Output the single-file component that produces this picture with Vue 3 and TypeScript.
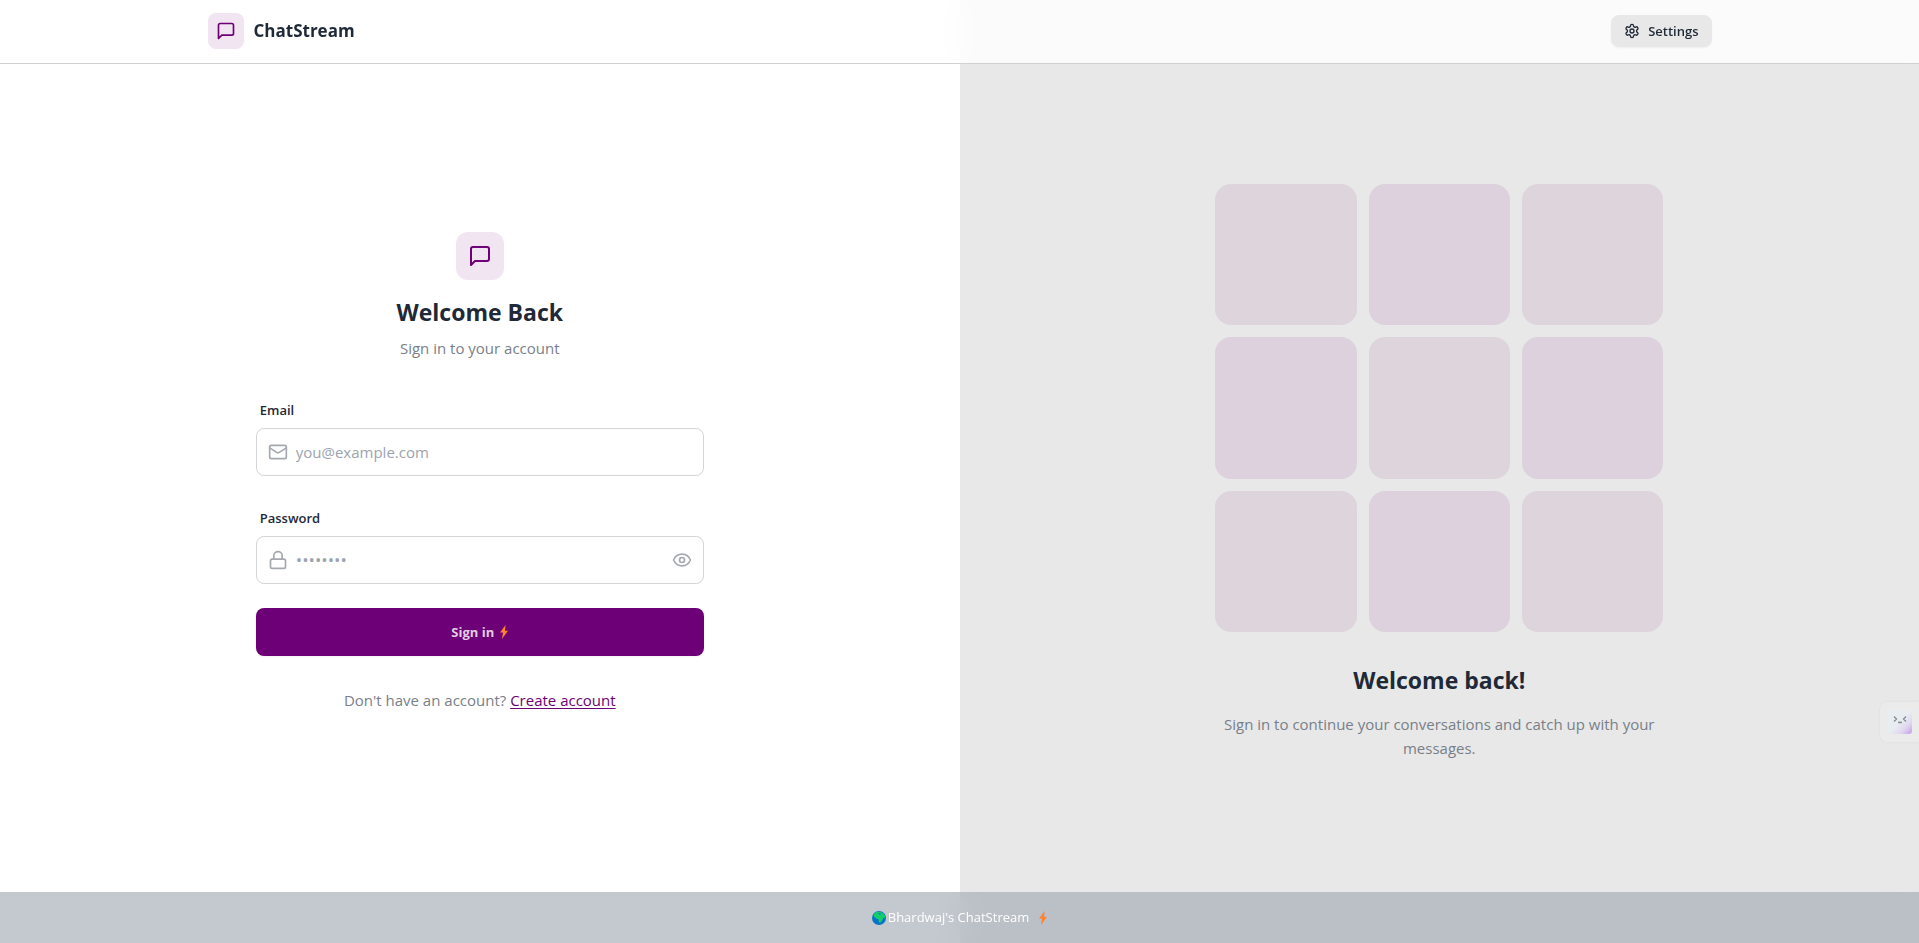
<script setup lang="ts">
import { ref } from 'vue'

const email = ref('')
const password = ref('')
const showPassword = ref(false)
const tiles = Array.from({ length: 9 }, (_, i) => i)
</script>

<template>
  <div class="page">
    <header class="topbar">
      <div class="topbar-inner">
        <a class="brand" href="#">
          <span class="brand-mark">
            <svg class="icon-20" viewBox="0 0 24 24" aria-hidden="true"><path d="M21 15a2 2 0 0 1-2 2H7l-4 4V5a2 2 0 0 1 2-2h14a2 2 0 0 1 2 2z" /></svg>
          </span>
          <span class="brand-name">ChatStream</span>
        </a>
        <button class="settings" type="button">
          <svg class="icon-16" viewBox="0 0 24 24" aria-hidden="true">
            <path d="M12.22 2h-.44a2 2 0 0 0-2 2v.18a2 2 0 0 1-1 1.73l-.43.25a2 2 0 0 1-2 0l-.15-.08a2 2 0 0 0-2.73.73l-.22.38a2 2 0 0 0 .73 2.73l.15.1a2 2 0 0 1 1 1.72v.51a2 2 0 0 1-1 1.74l-.15.09a2 2 0 0 0-.73 2.73l.22.38a2 2 0 0 0 2.73.73l.15-.08a2 2 0 0 1 2 0l.43.25a2 2 0 0 1 1 1.73V20a2 2 0 0 0 2 2h.44a2 2 0 0 0 2-2v-.18a2 2 0 0 1 1-1.73l.43-.25a2 2 0 0 1 2 0l.15.08a2 2 0 0 0 2.73-.73l.22-.39a2 2 0 0 0-.73-2.73l-.15-.08a2 2 0 0 1-1-1.74v-.5a2 2 0 0 1 1-1.74l.15-.09a2 2 0 0 0 .73-2.73l-.22-.38a2 2 0 0 0-2.73-.73l-.15.08a2 2 0 0 1-2 0l-.43-.25a2 2 0 0 1-1-1.73V4a2 2 0 0 0-2-2z" />
            <circle cx="12" cy="12" r="3" />
          </svg>
          <span>Settings</span>
        </button>
      </div>
    </header>

    <main class="columns">
      <section class="panel">
        <div class="content">
          <div class="intro">
            <span class="intro-mark">
              <svg class="icon-24" viewBox="0 0 24 24" aria-hidden="true"><path d="M21 15a2 2 0 0 1-2 2H7l-4 4V5a2 2 0 0 1 2-2h14a2 2 0 0 1 2 2z" /></svg>
            </span>
            <h1>Welcome Back</h1>
            <p>Sign in to your account</p>
          </div>

          <form class="form" @submit.prevent>
            <div class="field">
              <label for="email">Email</label>
              <div class="control">
                <svg class="icon-20" viewBox="0 0 24 24" aria-hidden="true">
                  <rect x="2" y="4" width="20" height="16" rx="2" />
                  <path d="m22 7-8.97 5.7a1.94 1.94 0 0 1-2.06 0L2 7" />
                </svg>
                <input id="email" v-model="email" type="email" placeholder="you@example.com" />
              </div>
            </div>
            <div class="field">
              <label for="password">Password</label>
              <div class="control">
                <svg class="icon-20" viewBox="0 0 24 24" aria-hidden="true">
                  <rect x="3" y="11" width="18" height="11" rx="2" />
                  <path d="M7 11V7a5 5 0 0 1 10 0v4" />
                </svg>
                <input id="password" v-model="password" class="secret" :type="showPassword ? 'text' : 'password'" placeholder="••••••••" />
                <button class="reveal" type="button" aria-label="Show password" @click="showPassword = !showPassword">
                  <svg class="icon-20" viewBox="0 0 24 24" aria-hidden="true">
                    <path d="M2.06 12.35a1 1 0 0 1 0-.7 10.75 10.75 0 0 1 19.88 0 1 1 0 0 1 0 .7 10.75 10.75 0 0 1-19.88 0" />
                    <circle cx="12" cy="12" r="3" />
                  </svg>
                </button>
              </div>
            </div>
            <button class="submit" type="submit">
              <span>Sign in</span>
              <svg class="bolt" viewBox="0 0 8 14" aria-hidden="true"><path d="M5.6 0 0 7.6h3L2 14l6-8.2H5z" /></svg>
            </button>
          </form>

          <p class="signup">Don't have an account? <a href="#">Create account</a></p>
        </div>
      </section>

      <section class="panel showcase">
        <div class="content">
          <div class="tiles">
            <div v-for="n in tiles" :key="n" class="tile" :class="{ strong: n % 2 === 1 }"></div>
          </div>
          <h2>Welcome back!</h2>
          <p>Sign in to continue your conversations and catch up with your messages.</p>
        </div>
      </section>
    </main>

    <footer class="footer">
      <svg class="globe" viewBox="0 0 14 14" aria-hidden="true">
        <circle cx="7" cy="7" r="7" fill="#0a74c4" />
        <path d="M2.6 2.2C4.3.8 6 .6 7.8 1l1.6.2 2.1 1.300 1.700 2.700-.7 2.200-1.500-.8-.4 2.200-2 2.800-1.400.2-.8-3.600-2.200-.6L2.400 6l-1-2.100z" fill="#13cf6b" />
        <path d="m5.5 2.600 2.300-.4 2 .8-2.200.5z" fill="#0a74c4" />
      </svg>
      <span>Bhardwaj's ChatStream</span>
      <svg class="bolt bolt-end" viewBox="0 0 8 14" aria-hidden="true"><path d="M5.6 0 0 7.6h3L2 14l6-8.2H5z" /></svg>
    </footer>

    <button class="helper" type="button" aria-label="Assistant">
      <svg viewBox="0 0 24 24" aria-hidden="true">
        <defs>
          <linearGradient id="helper-fill" x1="0" y1="0" x2="1" y2="1">
            <stop offset="0.5" stop-color="#e8edf2" />
            <stop offset="0.75" stop-color="#dfd5ee" />
            <stop offset="1" stop-color="#c39be8" />
          </linearGradient>
        </defs>
        <rect width="24" height="24" rx="3" fill="url(#helper-fill)" />
        <path d="m6 6.5 2.500 2.500L6 11.500M18 6.500 15.500 9l2.500 2.500M10.800 11.500v1h2.400v-1" fill="none" stroke="#858a92" stroke-width="1.3" />
      </svg>
    </button>
  </div>
</template>

<style>
body {
  background: #fff;
}
</style>

<style scoped>
.page {
  color: #1f2937;
  font-family: "Segoe UI", "Open Sans", "Noto Sans", sans-serif;
  font-size: 15px;
  line-height: 24px;
}

.page *,
.page {
  box-sizing: border-box;
}

h1,
h2,
p {
  margin: 0;
}

button,
input {
  font: inherit;
  color: inherit;
}

button {
  cursor: pointer;
}

svg {
  display: block;
  flex: none;
}

.icon-16,
.icon-20,
.icon-24 {
  fill: none;
  stroke: currentColor;
  stroke-width: 2;
  stroke-linecap: round;
  stroke-linejoin: round;
}

.icon-16 {
  width: 16px;
  height: 16px;
}

.icon-20 {
  width: 20px;
  height: 20px;
}

.icon-24 {
  width: 24px;
  height: 24px;
}

.topbar {
  position: fixed;
  inset: 0 0 auto;
  z-index: 2;
  border-bottom: 1px solid #d1d1d1;
  background: rgba(255, 255, 255, 0.8);
  backdrop-filter: blur(16px);
}

.topbar-inner {
  display: flex;
  align-items: center;
  justify-content: space-between;
  max-width: 1536px;
  height: 63px;
  margin: 0 auto;
  padding: 0 16px 1px;
}

.brand {
  display: flex;
  align-items: center;
  gap: 10px;
  color: inherit;
  text-decoration: none;
}

.brand-mark {
  display: grid;
  place-items: center;
  width: 36px;
  height: 36px;
  border-radius: 8px;
  background: #f0e5f1;
  color: #6d0076;
}

.brand-name {
  font-size: 17px;
  font-weight: 700;
}

.settings {
  display: flex;
  align-items: center;
  gap: 8px;
  height: 32px;
  padding: 0 12px;
  border: 1px solid #e8e8e8;
  border-radius: 8px;
  background: #e8e8e8;
  box-shadow: 0 1px 2px rgba(0, 0, 0, 0.05);
  font-size: 13px;
  font-weight: 600;
}

.columns {
  display: grid;
  grid-template-columns: 1fr 1fr;
  min-height: 100vh;
}

.panel {
  display: flex;
  align-items: center;
  justify-content: center;
  padding: 49px 48px 48px;
}

.showcase {
  background: #e8e8e8;
  text-align: center;
}

.content {
  width: 100%;
  max-width: 448px;
}

.intro {
  display: flex;
  flex-direction: column;
  align-items: center;
  gap: 8px;
  margin-bottom: 32px;
}

.intro-mark {
  display: grid;
  place-items: center;
  width: 48px;
  height: 48px;
  margin-bottom: 8px;
  border-radius: 12px;
  background: #f0e5f1;
  color: #6d0076;
}

h1,
h2 {
  font-size: 23px;
  line-height: 32px;
  font-weight: 700;
}

.intro p,
.signup,
.showcase p {
  color: #797f88;
}

.form {
  display: grid;
  gap: 24px;
}

.field label {
  display: block;
  padding: 8px 4px;
  font-size: 13px;
  line-height: 20px;
  font-weight: 600;
}

.control {
  display: flex;
  align-items: center;
  gap: 8px;
  height: 48px;
  padding: 0 11px;
  border: 1px solid #d2d4d7;
  border-radius: 8px;
  background: #fff;
  color: #a5a9af;
}

.control input {
  flex: 1;
  min-width: 0;
  padding: 0;
  border: 0;
  outline: 0;
  background: transparent;
  color: #1f2937;
}

.control .secret {
  font-size: 17px;
}

.control input::placeholder {
  color: #9ca3af;
  opacity: 1;
}

.reveal {
  padding: 0;
  border: 0;
  background: transparent;
}

.submit {
  display: flex;
  align-items: center;
  justify-content: center;
  gap: 6px;
  height: 48px;
  border: 0;
  border-radius: 8px;
  background: #6d0076;
  box-shadow: 0 1px 2px rgba(0, 0, 0, 0.05);
  color: #e1cce4;
  font-size: 13px;
  font-weight: 700;
}

.bolt {
  width: 8px;
  height: 14px;
  fill: #ff822d;
}

.signup {
  margin-top: 32px;
  text-align: center;
}

.signup a {
  color: #6d0076;
  text-underline-offset: 2px;
}

.tiles {
  display: grid;
  grid-template-columns: repeat(3, 1fr);
  gap: 12px;
  margin-bottom: 32px;
}

.tile {
  aspect-ratio: 1;
  border-radius: 16px;
  background: #ded4dc;
}

.tile.strong {
  background: #dcd1dd;
}

.showcase h2 {
  margin-bottom: 16px;
}

.footer {
  position: fixed;
  inset: auto 0 0;
  z-index: 2;
  display: flex;
  align-items: center;
  justify-content: center;
  gap: 2px;
  padding: 16px;
  background: rgba(156, 163, 175, 0.6);
  backdrop-filter: blur(16px);
  color: #fff;
  font-size: 13px;
  line-height: 19px;
}

.globe {
  width: 14px;
  height: 14px;
}

.bolt-end {
  margin-left: 8px;
}

.helper {
  position: fixed;
  right: 0;
  bottom: 201px;
  z-index: 3;
  padding: 8px 7px 8px 8px;
  border: 0;
  border-radius: 8px 0 0 8px;
  background: #ebebeb;
  box-shadow: 0 0 3px rgba(0, 0, 0, 0.06);
}

.helper svg {
  width: 24px;
  height: 24px;
}
</style>
